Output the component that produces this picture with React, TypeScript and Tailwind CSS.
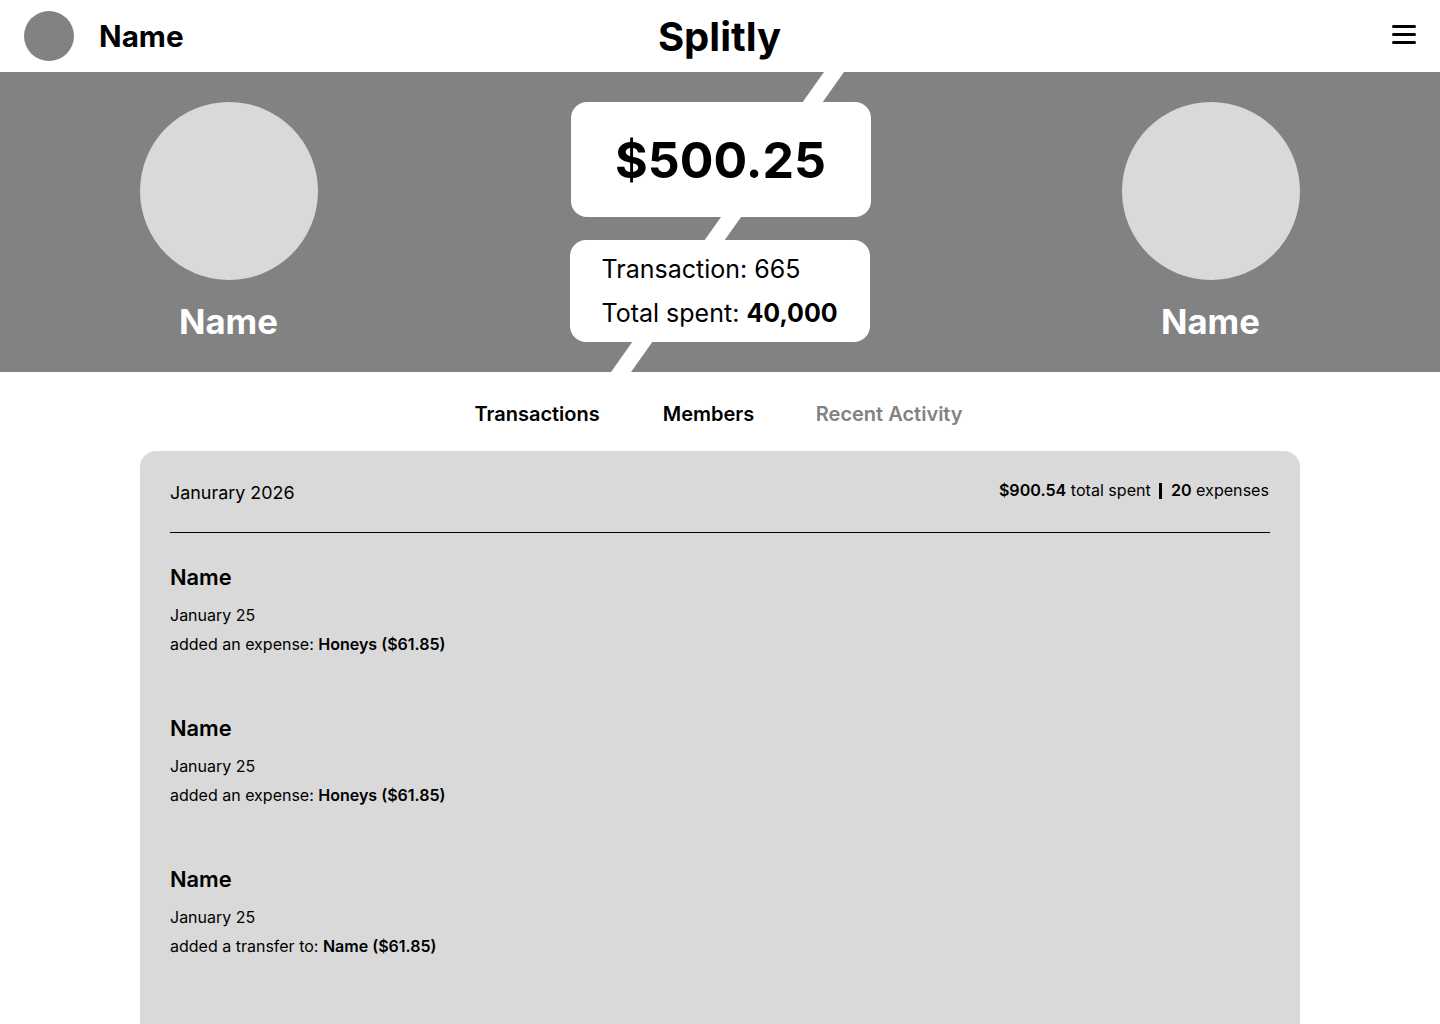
export default function App() {
  const activity = [
    { who: "Name", date: "January 25", text: "added an expense:", item: "Honeys ($61.85)" },
    { who: "Name", date: "January 25", text: "added an expense:", item: "Honeys ($61.85)" },
    { who: "Name", date: "January 25", text: "added a transfer to:", item: "Name ($61.85)" },
  ];

  return (
    <div className="h-[1024px] overflow-hidden bg-white text-black font-['Inter',sans-serif]">
      <header className="h-[72px] flex items-center justify-between pl-6 pr-6 relative">
        <div className="flex items-center gap-[25px]">
          <div className="w-[50px] h-[50px] rounded-full bg-[#828282]" />
          <span className="text-[29.7px] leading-[36px] font-bold">Name</span>
        </div>
        <h1 className="absolute left-0 right-0 top-[12px] text-center text-[40px] leading-[50px] font-bold pointer-events-none pr-px">Splitly</h1>
        <div className="w-6 flex flex-col gap-[5px] mt-[-3px]">
          <div className="h-[3px] rounded-sm bg-black" />
          <div className="h-[3px] rounded-sm bg-black" />
          <div className="h-[3px] rounded-sm bg-black" />
        </div>
      </header>

      <section className="relative h-[300px] bg-[#828282] flex justify-between px-[140px] pt-[30px]">
        {/* diagonal stripe behind the cards */}
        <svg className="absolute inset-0" width="1440" height="300" viewBox="0 0 1440 300">
          <polygon points="824,0 844,0 631,300 611,300" fill="#ffffff" />
        </svg>

        <div className="relative w-[178px] flex flex-col items-center">
          <div className="w-[178px] h-[178px] rounded-full bg-[#d9d9d9]" />
          <span className="mt-[15px] pr-px text-[34.7px] leading-[52px] font-bold text-white">Name</span>
        </div>

        <div className="relative w-[301px] flex flex-col">
          <div className="ml-px w-[300px] h-[115px] pt-px rounded-2xl bg-white flex items-center justify-center text-[50px] font-bold">
            $500.25
          </div>
          <div className="mt-[23px] w-[300px] h-[102px] rounded-2xl bg-white pl-8 flex flex-col justify-center gap-[14px] text-[25px] leading-[30px]">
            <p>Transaction: 665</p>
            <p>
              Total spent: <span className="font-bold">40,000</span>
            </p>
          </div>
        </div>

        <div className="relative w-[178px] flex flex-col items-center">
          <div className="w-[178px] h-[178px] rounded-full bg-[#d9d9d9]" />
          <span className="mt-[15px] pr-px text-[34.7px] leading-[52px] font-bold text-white">Name</span>
        </div>
      </section>

      <nav className="h-[79px] flex items-start justify-center pt-[30px] text-[20px] leading-6 font-semibold">
        <span className="ml-[-3px] mr-[63px]">Transactions</span>
        <span className="mr-[61.5px]">Members</span>
        <span className="text-[#828282]">Recent Activity</span>
      </nav>

      <main className="mx-[140px] h-[700px] rounded-t-2xl bg-[#d9d9d9] px-[30px]">
        <div className="h-[82px] flex justify-between border-b border-black pt-[30px]">
          <span className="text-[17.9px] leading-6">Janurary 2026</span>
          <div className="flex items-start text-[16.1px] leading-5 mt-[-1px] pr-px">
            <span>
              <span className="font-semibold">$900.54</span> total spent
            </span>
            <span className="ml-2 mr-[9px] mt-[3px] w-[3px] h-4 bg-black" />
            <span>
              <span className="font-semibold">20</span> expenses
            </span>
          </div>
        </div>

        <div className="pt-[29px] flex flex-col gap-[48px]">
          {activity.map((a, i) => (
            <div key={i} className="h-[103px]">
              <p className="text-[21.8px] leading-[30px] font-semibold">{a.who}</p>
              <p className="mt-[9px] text-[16px] leading-[29px]">{a.date}</p>
              <p className="text-[16px] leading-[29px]">
                {a.text} <span className="font-semibold">{a.item}</span>
              </p>
            </div>
          ))}
        </div>
      </main>
    </div>
  );
}
